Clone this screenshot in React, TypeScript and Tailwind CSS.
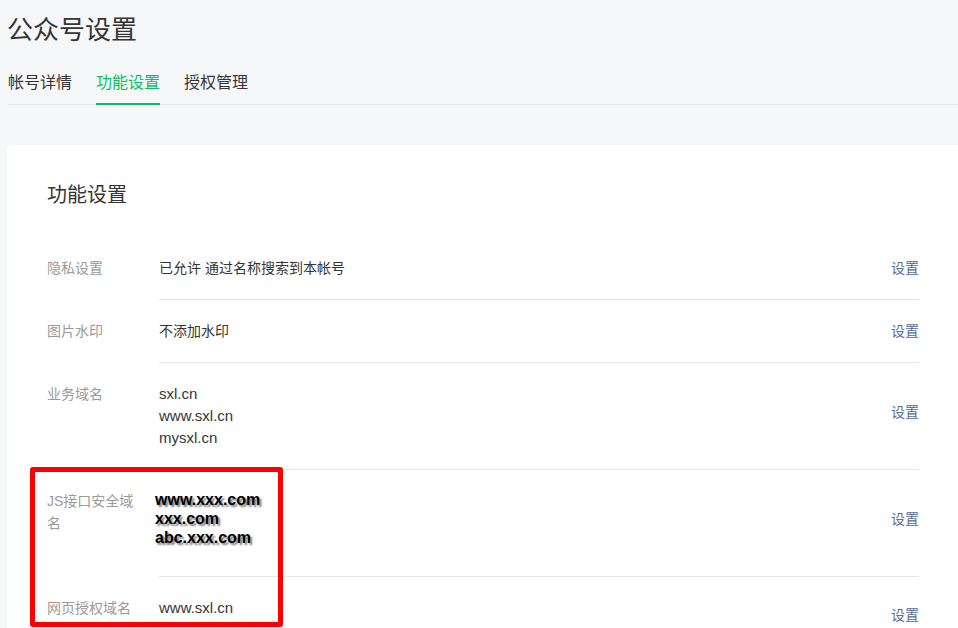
import React from 'react';

type Row = {
  label: string;
  lines: string[];
  latin?: boolean;
  tall?: boolean;
  shot?: boolean;
  more?: boolean;
};

const ROWS: Row[] = [
  { label: '隐私设置', lines: ['已允许 通过名称搜索到本帐号'] },
  { label: '图片水印', lines: ['不添加水印'] },
  { label: '业务域名', lines: ['sxl.cn', 'www.sxl.cn', 'mysxl.cn'], latin: true, tall: true },
  { label: 'JS接口安全域名', lines: ['www.xxx.com', 'xxx.com', 'abc.xxx.com'], tall: true, shot: true },
  { label: '网页授权域名', lines: ['www.sxl.cn'], latin: true, tall: true, more: true },
];

const TABS = ['帐号详情', '功能设置', '授权管理'];

export default function App() {
  return (
    <div
      className="relative h-[628px] overflow-hidden bg-[#f6f7f9] pl-[7px] text-[#353535]"
      style={{ fontFamily: '"Liberation Sans", "Noto Sans CJK SC", sans-serif' }}
    >
      {/* Page header */}
      <div className="pl-px pt-3">
        <h1 className="-ml-px text-[26px] leading-[36px] font-normal">公众号设置</h1>
        <div className="mt-[23px] flex gap-6 border-b border-[#e4e6ea] text-[16px]">
          {TABS.map((tab, i) => (
            <div
              key={tab}
              className={`-mb-px border-b-2 pb-2 leading-6 ${
                i === 1 ? 'border-[#07c160] text-[#07c160]' : 'border-transparent'
              }`}
            >
              {tab}
            </div>
          ))}
        </div>
      </div>

      {/* Card */}
      <div className="mt-10 rounded-tl-[4px] bg-white pl-10 pr-[39px] pt-9">
        <h2 className="text-[20px] leading-[28px] font-normal">功能设置</h2>
        <div className="mt-7 text-[14px]">
          {ROWS.map((row) => (
            <div key={row.label} className="flex">
              <div className="w-[112px] shrink-0 pr-4 pt-5 leading-[22px] text-[#9a9a9a]">{row.label}</div>
              <div className="flex flex-1 border-b border-[#e7e7eb] py-5">
                {row.shot ? (
                  <div className="-ml-1 flex-1 pb-[9px] text-[16px] font-bold leading-[19px] text-black [text-shadow:2px_2px_2px_rgba(0,0,0,0.55)]">
                    {row.lines.map((l) => (
                      <div key={l}>{l}</div>
                    ))}
                  </div>
                ) : (
                  <div className={`flex-1 leading-[22px] ${row.latin ? 'text-[15px]' : ''} ${row.more ? 'pb-[22px]' : ''}`}>
                    {row.lines.map((l) => (
                      <div key={l}>{l}</div>
                    ))}
                  </div>
                )}
                <a className={`self-center leading-[22px] text-[#576b95] ${row.tall ? 'mb-2' : ''}`}>设置</a>
              </div>
            </div>
          ))}
        </div>
      </div>

      {/* Red annotation frame */}
      <div className="pointer-events-none absolute left-[30px] top-[467px] h-[160px] w-[253px] rounded-[3px] border-[5px] border-[#ff0000]" />
    </div>
  );
}
